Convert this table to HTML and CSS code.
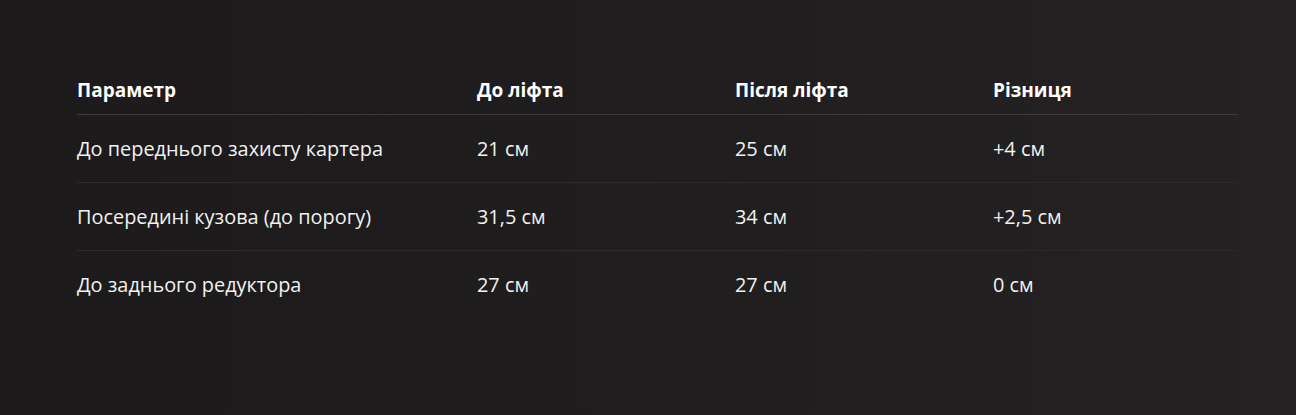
FILE: index.html
```html
<!DOCTYPE html>
<html lang="uk">
<head>
<meta charset="utf-8">
<title>Кліренс</title>
<link rel="stylesheet" href="styles.css">
</head>
<body>
<main class="page">
  <table class="spec">
    <thead>
      <tr>
        <th class="c1">Параметр</th>
        <th class="c2">До ліфта</th>
        <th class="c3">Після ліфта</th>
        <th class="c4">Різниця</th>
      </tr>
    </thead>
    <tbody>
      <tr>
        <td>До переднього захисту картера</td>
        <td>21 см</td>
        <td>25 см</td>
        <td>+4 см</td>
      </tr>
      <tr>
        <td>Посередині кузова (до порогу)</td>
        <td>31,5 см</td>
        <td>34 см</td>
        <td>+2,5 см</td>
      </tr>
      <tr>
        <td>До заднього редуктора</td>
        <td>27 см</td>
        <td>27 см</td>
        <td>0 см</td>
      </tr>
    </tbody>
  </table>
</main>
</body>
</html>
```

FILE: styles.css
```css
html, body {
  margin: 0;
  padding: 0;
}
body {
  width: 1296px;
  height: 415px;
  overflow: hidden;
  background: linear-gradient(90deg, #1c1a1b 0%, #1f1d1e 50%, #242223 100%);
  font-family: "Open Sans", "Noto Sans", "Liberation Sans", sans-serif;
  color: #f2f2f2;
}
.page {
  padding: 66px 0 0 77px;
}
.spec {
  border-collapse: collapse;
  width: 1161px;
  table-layout: fixed;
  line-height: 24px;
}
.c1 { width: 400px; }
.c2 { width: 258px; }
.c3 { width: 258px; }
.c4 { width: 245px; }
.spec th {
  text-align: left;
  font-size: 19px;
  font-weight: 700;
  color: #ffffff;
  padding: 12px 0 12px 0;
  border-bottom: 1px solid #3c3a3b;
}
.spec td {
  font-size: 19.9px;
  padding: 22px 0 21px 0;
  border-bottom: 1px solid #2c2a2b;
  font-weight: 400;
}
.spec tbody tr:last-child td {
  border-bottom: none;
}
```
